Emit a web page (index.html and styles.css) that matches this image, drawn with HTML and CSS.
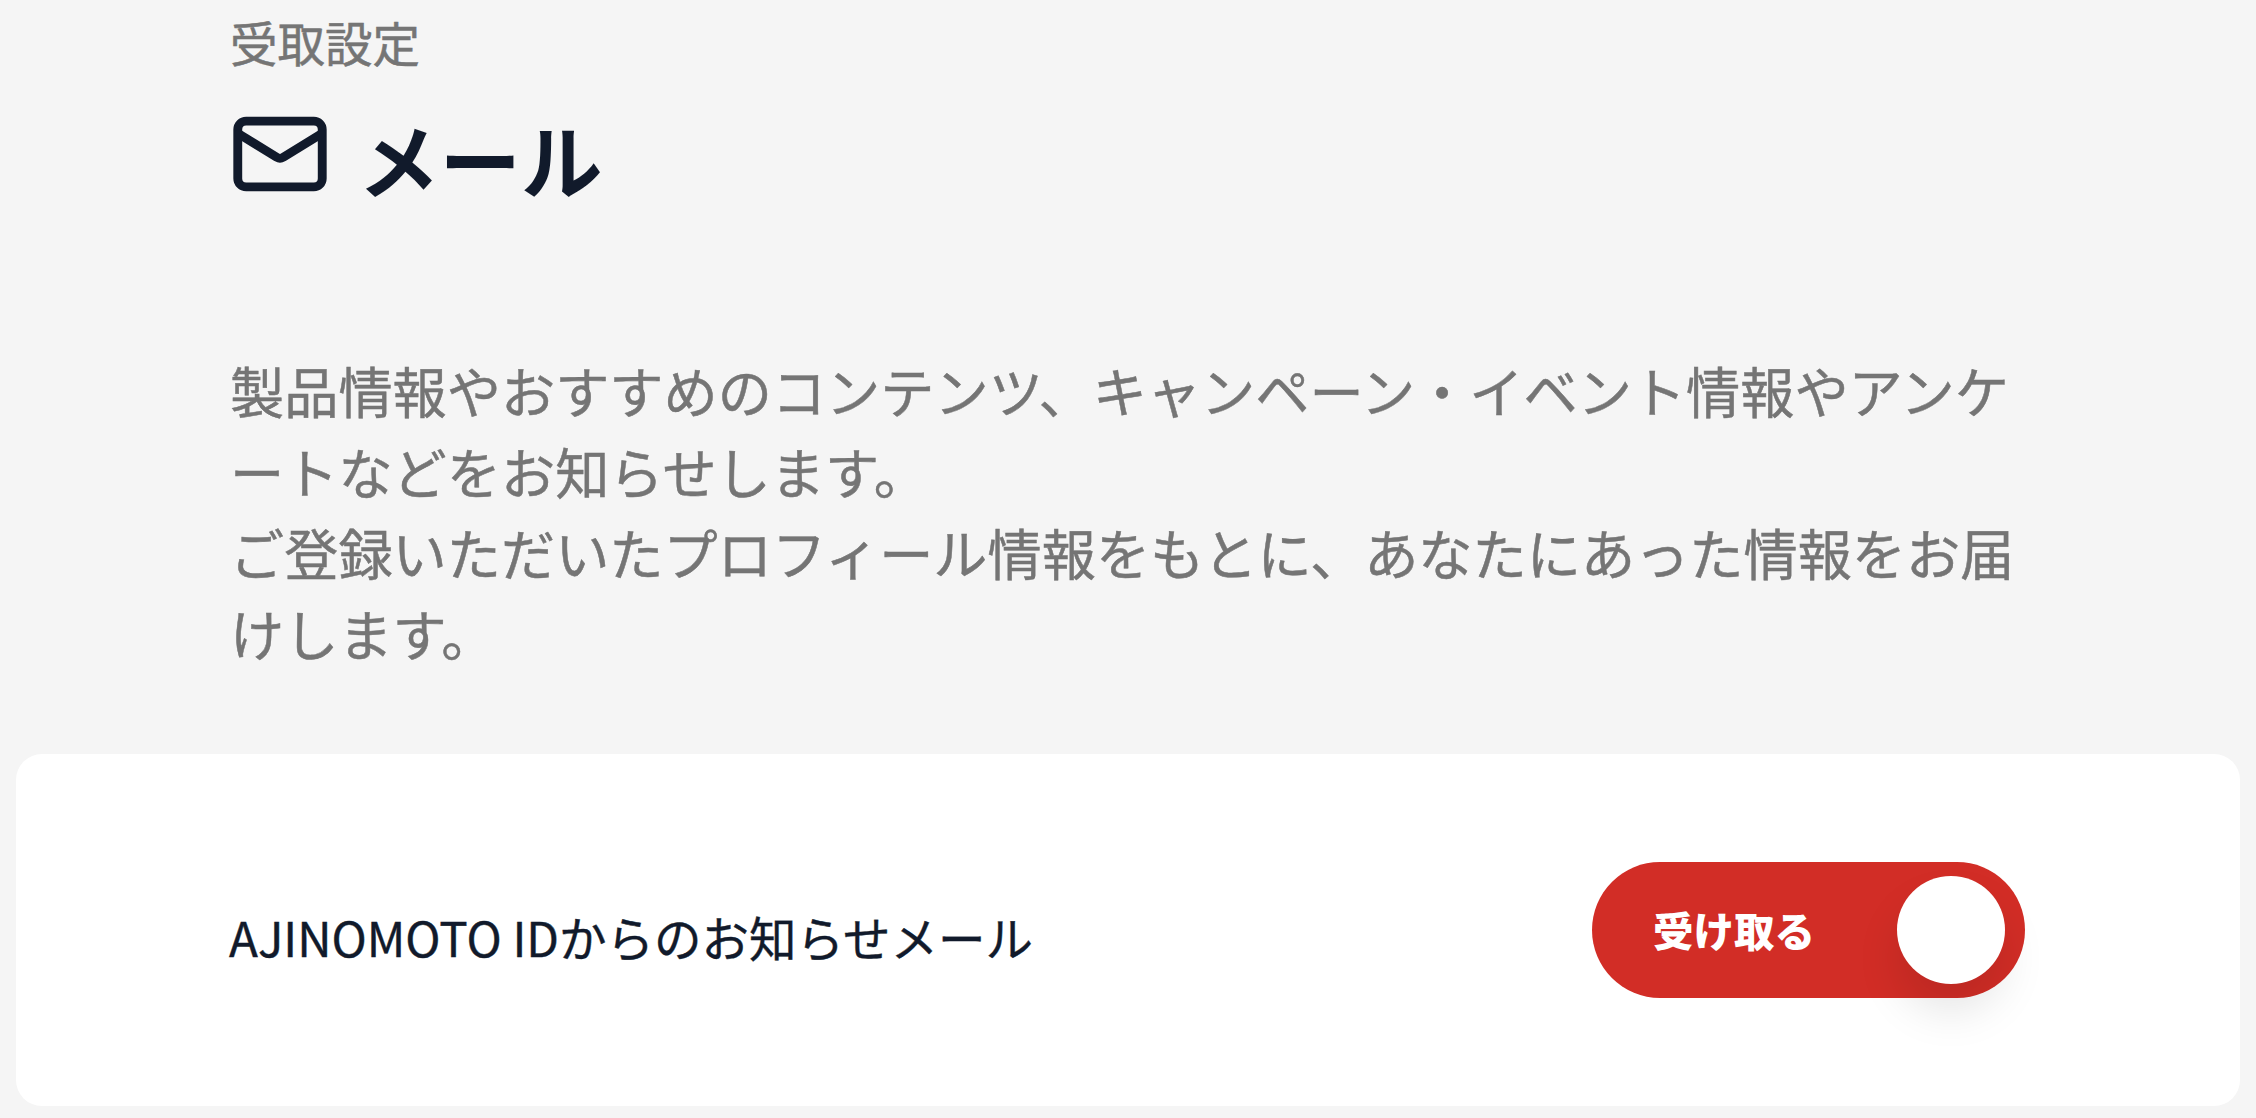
FILE: index.html
```html
<!DOCTYPE html>
<html lang="ja">
<head>
<meta charset="utf-8">
<title>受取設定 メール</title>
<link rel="stylesheet" href="styles.css">
</head>
<body>
<main class="page">
  <header class="intro">
    <p class="eyebrow">受取設定</p>
    <h1 class="title">
      <svg class="title-icon" viewBox="0 0 24 24" fill="none" stroke="#111a2b" stroke-width="1.9" stroke-linejoin="round" stroke-linecap="round" aria-hidden="true">
        <rect x="2.95" y="4.95" width="18.1" height="14.1" rx="1.8"/>
        <path d="M3.2 7.7 11.3 12.7Q12 13.1 12.7 12.7L20.8 7.7"/>
      </svg>
      <span class="title-text">メール</span>
    </h1>
    <p class="desc">製品情報やおすすめのコンテンツ、キャンペーン・イベント情報やアンケートなどをお知らせします。<br>ご登録いただいたプロフィール情報をもとに、あなたにあった情報をお届けします。</p>
  </header>
  <section class="card">
    <span class="card-label">AJINOMOTO IDからのお知らせメール</span>
    <div class="toggle">
      <span class="toggle-text">受け取る</span>
      <span class="toggle-knob"></span>
    </div>
  </section>
</main>
</body>
</html>
```
FILE: styles.css
```css
* { box-sizing: border-box; }
html, body { margin: 0; height: 100%; }
body {
  background: #f5f5f5;
  font-family: "Noto Sans CJK JP", "Noto Sans", sans-serif;
  overflow: hidden;
}
.page { padding: 0 16px; }
.intro { padding: 8px 210px 0 214px; }
.eyebrow {
  margin: 0;
  font-size: 47.5px;
  line-height: 68px;
  color: #757575;
  -webkit-text-stroke: 0.5px #757575;
}
.title {
  display: flex;
  align-items: center;
  gap: 22px;
  margin: 22px 0 0 -6px;
  font-size: 81.5px;
  line-height: 112px;
  font-weight: 700;
  color: #111a2b;
}
.title-icon { width: 112px; height: 112px; flex: none; }
.title-text { position: relative; top: 3px; }
.desc {
  margin: 139px 0 0;
  font-size: 54.2px;
  line-height: 81px;
  color: #757575;
  -webkit-text-stroke: 0.5px #757575;
}
.card {
  display: flex;
  align-items: center;
  justify-content: space-between;
  height: 352px;
  margin-top: 81px;
  padding: 0 215px 0 213px;
  background: #fff;
  border-radius: 26px;
}
.card-label {
  font-size: 47.5px;
  line-height: 68px;
  color: #111a2b;
  -webkit-text-stroke: 0.4px #111a2b;
  position: relative;
  top: 7px;
}
.toggle {
  display: flex;
  align-items: center;
  justify-content: space-between;
  width: 433px;
  height: 136px;
  padding: 0 20px 0 61px;
  background: #d22d26;
  border-radius: 68px;
}
.toggle-text {
  font-size: 40.5px;
  line-height: 58px;
  font-weight: 900;
  color: #fff;
}
.toggle-knob {
  width: 108px;
  height: 108px;
  background: #fff;
  border-radius: 50%;
  box-shadow: 0 28px 44px rgba(0, 0, 0, 0.1);
}
```
